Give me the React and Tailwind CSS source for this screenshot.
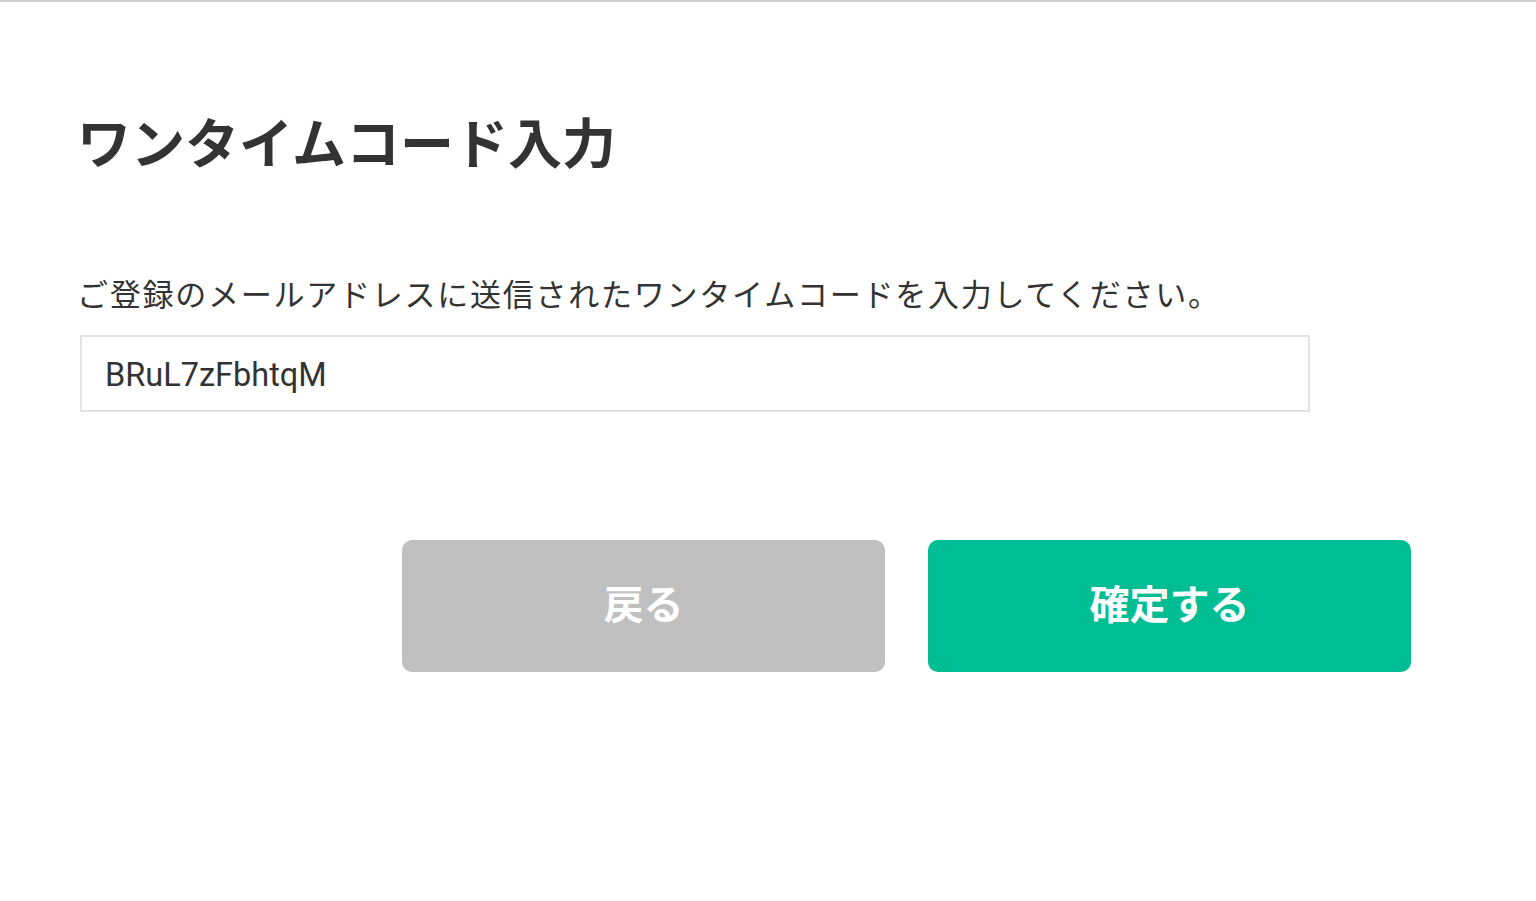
export default function App() {
  return (
    <div
      className="min-h-[901px] w-full border-t-2 border-[#cfcfcf] bg-white text-[#333]"
      style={{ fontFamily: 'Roboto, "Noto Sans CJK JP", sans-serif' }}
    >
      <div className="pl-[77px] pt-[108px]">
        <h1 className="text-[54px] font-bold leading-[72px] tracking-[0px] text-[#333]">
          ワンタイムコード入力
        </h1>

        <p className="mt-[92px] text-[31px] leading-[44px] tracking-[1.75px] text-[#333]">
          ご登録のメールアドレスに送信されたワンタイムコードを入力してください。
        </p>

        <input
          readOnly
          value="BRuL7zFbhtqM"
          className="mt-[17px] ml-[3px] block h-[77px] w-[1230px] border-2 border-[#e2e2e2] bg-white px-[23px] pt-[3px] text-[32.5px] text-[#333] outline-none"
          style={{ fontFamily: 'Roboto, "Noto Sans CJK JP", sans-serif' }}
        />

        <div className="mt-[128px] ml-[325px] flex gap-[43px]">
          <button className="flex h-[132px] w-[483px] items-center justify-center rounded-[10px] bg-[#c0c0c0] text-[40px] font-bold text-white">
            戻る
          </button>
          <button className="flex h-[132px] w-[483px] items-center justify-center rounded-[10px] bg-[#00bd94] text-[40px] font-bold text-white">
            確定する
          </button>
        </div>
      </div>
    </div>
  );
}
